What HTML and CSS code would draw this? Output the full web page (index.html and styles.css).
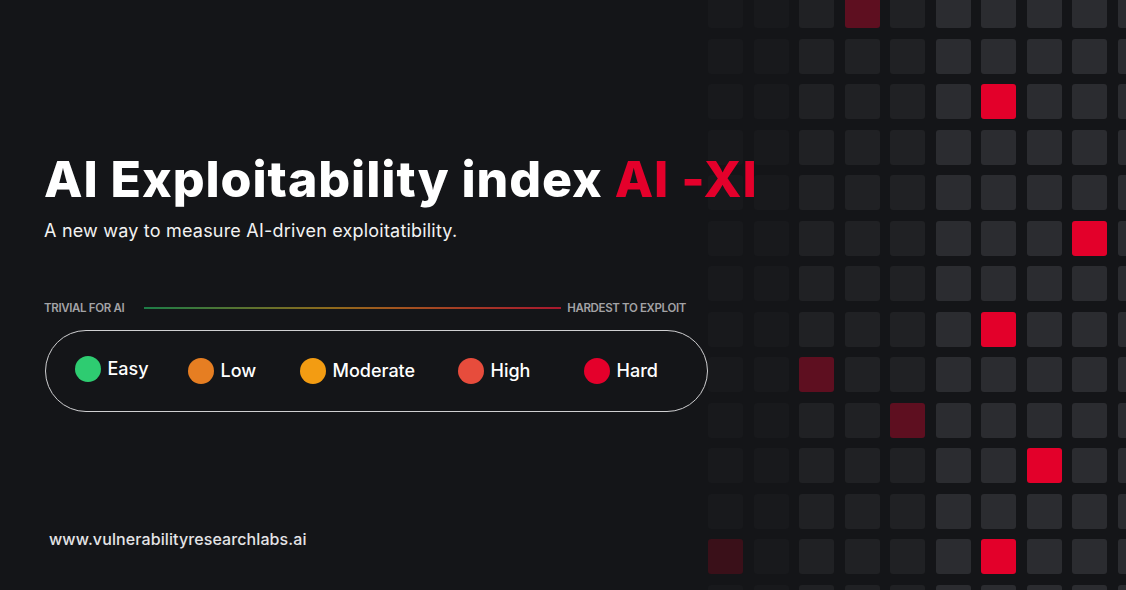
FILE: index.html
```html
<!DOCTYPE html>
<html lang="en">
<head>
<meta charset="utf-8">
<title>AI Exploitability index AI-XI</title>
<link rel="stylesheet" href="styles.css">
</head>
<body>
<div class="page">
  <section class="content">
    <h1 class="title">AI Exploitability index <span class="accent">AI -XI</span></h1>
    <p class="subtitle">A new way to measure AI-driven exploitatibility.</p>
    <div class="scale">
      <span class="scale-label">TRIVIAL FOR AI</span>
      <span class="scale-line"></span>
      <span class="scale-label">HARDEST TO EXPLOIT</span>
    </div>
    <div class="legend">
      <div class="item item-easy"><span class="dot easy"></span><span class="name">Easy</span></div>
      <div class="item"><span class="dot low"></span><span class="name">Low</span></div>
      <div class="item"><span class="dot moderate"></span><span class="name">Moderate</span></div>
      <div class="item"><span class="dot high"></span><span class="name">High</span></div>
      <div class="item"><span class="dot hard"></span><span class="name">Hard</span></div>
    </div>
    <p class="url">www.vulnerabilityresearchlabs.ai</p>
  </section>
  <aside class="matrix">
    <div class="cells">
      <i class="c"></i><i class="c"></i><i class="c"></i><i class="c d"></i><i class="c"></i><i class="c"></i><i class="c"></i><i class="c"></i><i class="c"></i><i class="c"></i>
      <i class="c"></i><i class="c"></i><i class="c"></i><i class="c"></i><i class="c"></i><i class="c"></i><i class="c"></i><i class="c"></i><i class="c"></i><i class="c"></i>
      <i class="c"></i><i class="c"></i><i class="c"></i><i class="c"></i><i class="c"></i><i class="c"></i><i class="c r"></i><i class="c"></i><i class="c"></i><i class="c"></i>
      <i class="c"></i><i class="c"></i><i class="c"></i><i class="c"></i><i class="c"></i><i class="c"></i><i class="c"></i><i class="c"></i><i class="c"></i><i class="c"></i>
      <i class="c"></i><i class="c"></i><i class="c"></i><i class="c"></i><i class="c"></i><i class="c"></i><i class="c"></i><i class="c"></i><i class="c"></i><i class="c"></i>
      <i class="c"></i><i class="c"></i><i class="c"></i><i class="c"></i><i class="c"></i><i class="c"></i><i class="c"></i><i class="c"></i><i class="c r"></i><i class="c"></i>
      <i class="c"></i><i class="c"></i><i class="c"></i><i class="c"></i><i class="c"></i><i class="c"></i><i class="c"></i><i class="c"></i><i class="c"></i><i class="c"></i>
      <i class="c"></i><i class="c"></i><i class="c"></i><i class="c"></i><i class="c"></i><i class="c"></i><i class="c r"></i><i class="c"></i><i class="c"></i><i class="c"></i>
      <i class="c"></i><i class="c"></i><i class="c d"></i><i class="c"></i><i class="c"></i><i class="c"></i><i class="c"></i><i class="c"></i><i class="c"></i><i class="c"></i>
      <i class="c"></i><i class="c"></i><i class="c"></i><i class="c"></i><i class="c d"></i><i class="c"></i><i class="c"></i><i class="c"></i><i class="c"></i><i class="c"></i>
      <i class="c"></i><i class="c"></i><i class="c"></i><i class="c"></i><i class="c"></i><i class="c"></i><i class="c"></i><i class="c r"></i><i class="c"></i><i class="c"></i>
      <i class="c"></i><i class="c"></i><i class="c"></i><i class="c"></i><i class="c"></i><i class="c"></i><i class="c"></i><i class="c"></i><i class="c"></i><i class="c"></i>
      <i class="c d2"></i><i class="c"></i><i class="c"></i><i class="c"></i><i class="c"></i><i class="c"></i><i class="c r"></i><i class="c"></i><i class="c"></i><i class="c"></i>
      <i class="c"></i><i class="c"></i><i class="c"></i><i class="c"></i><i class="c"></i><i class="c"></i><i class="c"></i><i class="c"></i><i class="c"></i><i class="c"></i>
    </div>
  </aside>
</div>
</body>
</html>
```
FILE: styles.css
```css
* { box-sizing: border-box; }
html, body {
  margin: 0;
  padding: 0;
  background: #141518;
  width: 1126px;
  height: 590px;
  overflow: hidden;
}
body {
  font-family: "Inter", "Open Sans", sans-serif;
  color: #ffffff;
}
.page {
  display: grid;
  grid-template-columns: 708px 1fr;
  height: 590px;
}
.content {
  position: relative;
  z-index: 2;
  padding: 153px 0 0 44px;
  display: flex;
  flex-direction: column;
  align-items: flex-start;
}
.title {
  margin: 0;
  font-size: 50px;
  line-height: 52px;
  font-weight: 800;
  letter-spacing: 0.95px;
  white-space: nowrap;
}
.accent { color: #e4002b; }
.subtitle {
  margin: 15px 0 0;
  font-size: 18px;
  line-height: 22px;
  font-weight: 400;
  letter-spacing: 0.2px;
  color: #f2f2f2;
}
.scale {
  margin-top: 59px;
  width: 642px;
  display: flex;
  align-items: center;
}
.scale-label {
  font-size: 11.5px;
  line-height: 14px;
  font-weight: 600;
  letter-spacing: -0.35px;
  color: #a3a3a6;
  white-space: nowrap;
}
.scale-line {
  flex: 1;
  height: 2px;
  margin: 0 6px 0 20px;
  background: linear-gradient(90deg, #1d7d47 0%, #8f6a1c 45%, #a3561f 60%, #a8182e 100%);
}
.legend {
  margin-top: 15px;
  margin-left: 1px;
  width: 663px;
  height: 82px;
  border: 1.5px solid #cfcfd1;
  border-radius: 41px;
  display: grid;
  grid-template-columns: 113px 112px 158px 126px auto;
  align-items: center;
  padding-left: 28.5px;
}
.item {
  display: flex;
  align-items: center;
  gap: 7px;
}
.item-easy { margin-top: -4px; }
.dot {
  width: 26px;
  height: 26px;
  border-radius: 50%;
  flex: none;
}
.easy { background: #2ecc71; }
.low { background: #e67e22; }
.moderate { background: #f39c12; }
.high { background: #e74c3c; }
.hard { background: #e4002b; }
.name {
  font-size: 18px;
  line-height: 20px;
  font-weight: 500;
  color: #ffffff;
}
.url {
  margin: 118px 0 0 5px;
  font-size: 16px;
  line-height: 18px;
  font-weight: 500;
  letter-spacing: 0.1px;
  color: #e4e4e6;
}
.matrix {
  position: relative;
  z-index: 1;
  overflow: hidden;
  height: 590px;
}
.cells {
  margin-top: -7px;
  display: grid;
  grid-template-columns: repeat(10, 35px);
  grid-auto-rows: 35px;
  gap: 10.5px;
  width: 460px;
}
.c {
  display: block;
  border-radius: 3px;
  background: #2b2c30;
}
.c:nth-child(10n+1), .c:nth-child(10n+2) { background: #18191c; }
.c:nth-child(10n+3), .c:nth-child(10n+4), .c:nth-child(10n+5) { background: #202124; }
.c.r { background: #e3002a; }
.c.d { background: #5e0f20; }
.c.d2 { background: #3a1019; }
```
